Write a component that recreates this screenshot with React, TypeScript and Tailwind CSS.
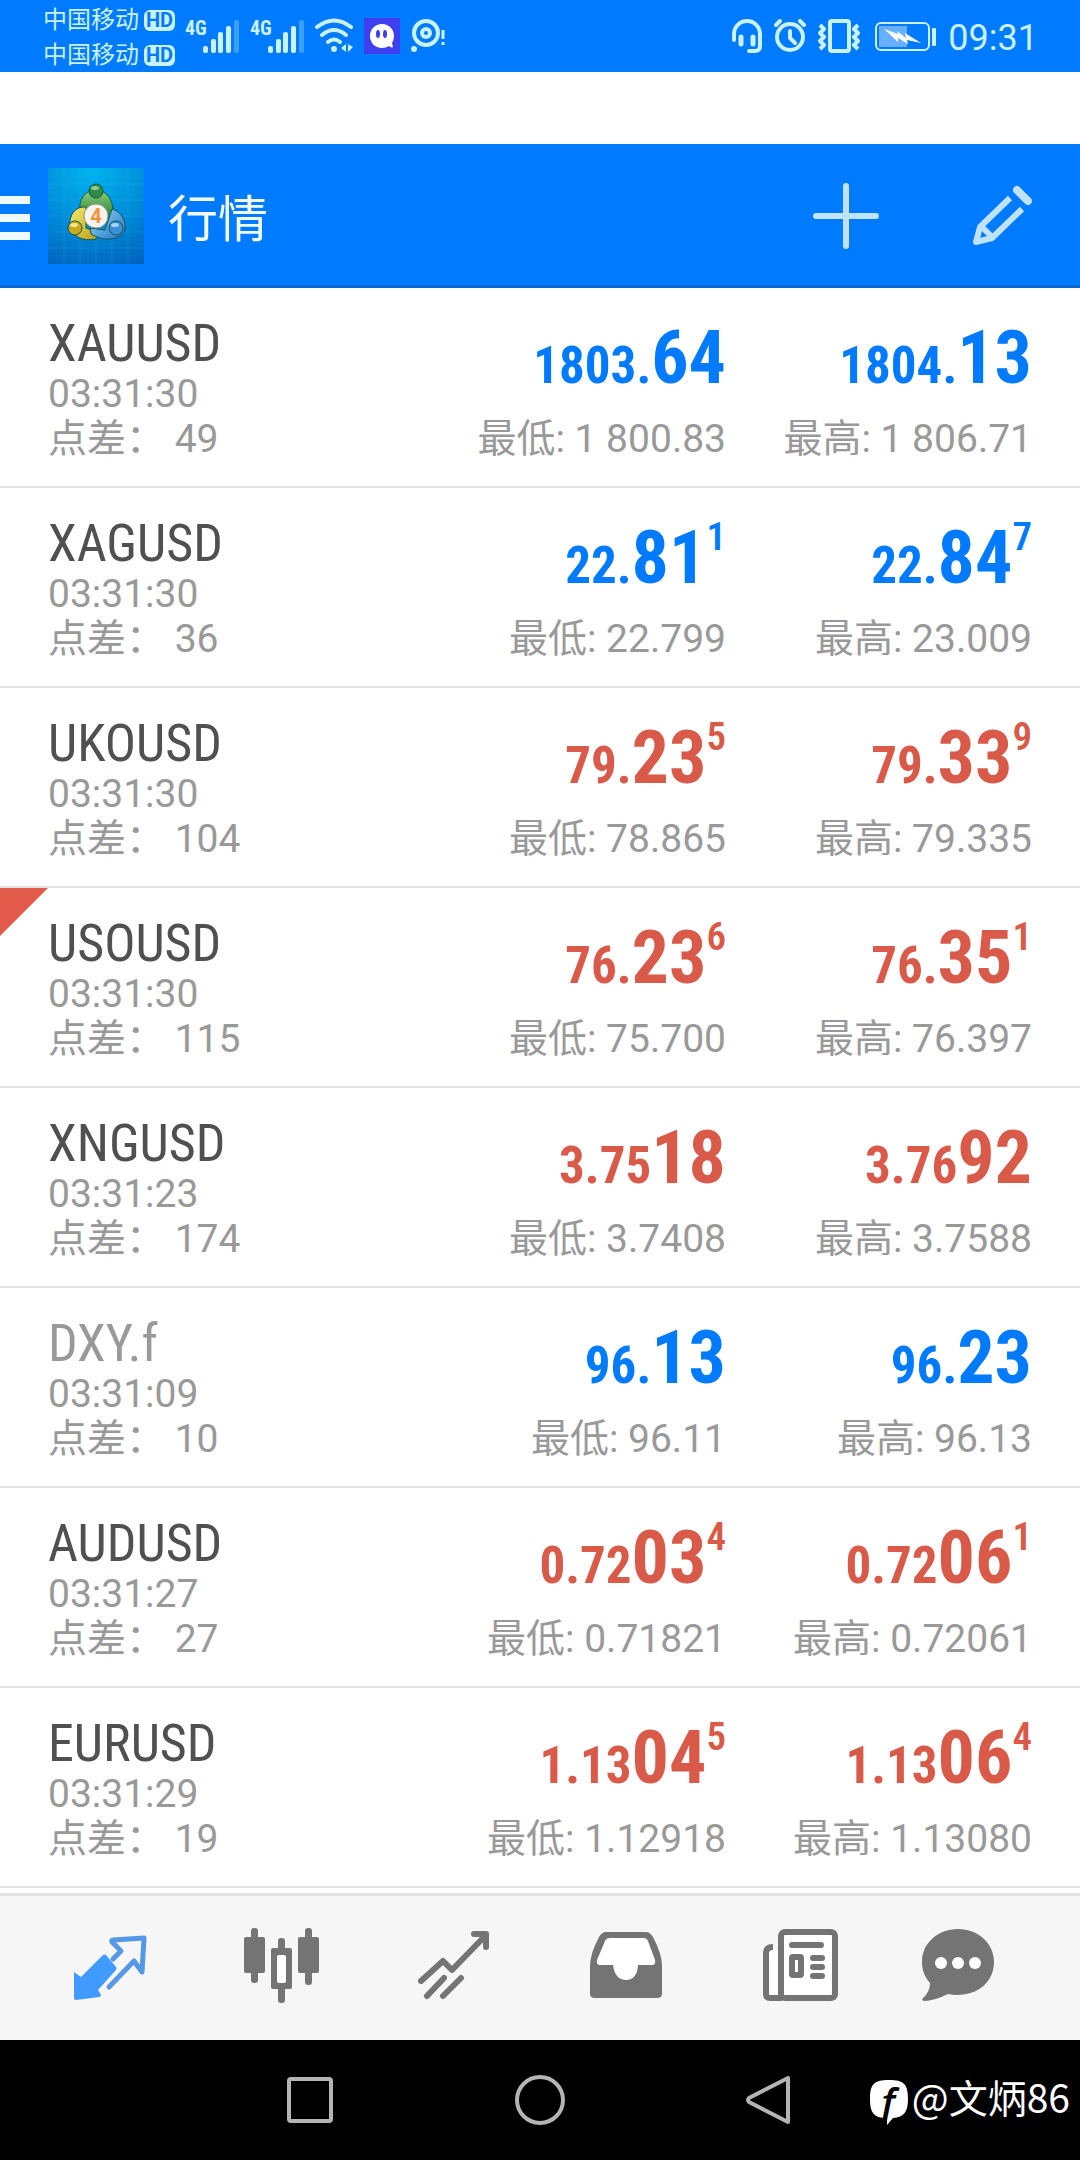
import type { ReactNode } from 'react';
import clsx from 'clsx';

interface Price {
  small: string;
  big: string;
  sup?: string;
}

interface Quote {
  symbol: string;
  time: string;
  spread: number;
  trend: 'up' | 'down';
  bid: Price;
  ask: Price;
  low: string;
  high: string;
  muted?: boolean;
  flagged?: boolean;
}

const QUOTES: Quote[] = [
  {
    symbol: 'XAUUSD', time: '03:31:30', spread: 49, trend: 'up',
    bid: { small: '1803.', big: '64' }, ask: { small: '1804.', big: '13' },
    low: '1 800.83', high: '1 806.71'
  },
  {
    symbol: 'XAGUSD', time: '03:31:30', spread: 36, trend: 'up',
    bid: { small: '22.', big: '81', sup: '1' }, ask: { small: '22.', big: '84', sup: '7' },
    low: '22.799', high: '23.009'
  },
  {
    symbol: 'UKOUSD', time: '03:31:30', spread: 104, trend: 'down',
    bid: { small: '79.', big: '23', sup: '5' }, ask: { small: '79.', big: '33', sup: '9' },
    low: '78.865', high: '79.335'
  },
  {
    symbol: 'USOUSD', time: '03:31:30', spread: 115, trend: 'down',
    bid: { small: '76.', big: '23', sup: '6' }, ask: { small: '76.', big: '35', sup: '1' },
    low: '75.700', high: '76.397', flagged: true
  },
  {
    symbol: 'XNGUSD', time: '03:31:23', spread: 174, trend: 'down',
    bid: { small: '3.75', big: '18' }, ask: { small: '3.76', big: '92' },
    low: '3.7408', high: '3.7588'
  },
  {
    symbol: 'DXY.f', time: '03:31:09', spread: 10, trend: 'up',
    bid: { small: '96.', big: '13' }, ask: { small: '96.', big: '23' },
    low: '96.11', high: '96.13', muted: true
  },
  {
    symbol: 'AUDUSD', time: '03:31:27', spread: 27, trend: 'down',
    bid: { small: '0.72', big: '03', sup: '4' }, ask: { small: '0.72', big: '06', sup: '1' },
    low: '0.71821', high: '0.72061'
  },
  {
    symbol: 'EURUSD', time: '03:31:29', spread: 19, trend: 'down',
    bid: { small: '1.13', big: '04', sup: '5' }, ask: { small: '1.13', big: '06', sup: '4' },
    low: '1.12918', high: '1.13080'
  }
];

function Carrier() {
  return (
    <div className="flex items-center gap-[5px] h-[35px]">
      <span className="text-2xl leading-none">中国移动</span>
      <span className="w-[31px] h-[21px] rounded-[6px] bg-[#c8f2ff] text-[#007aff] font-['Roboto'] font-bold text-xl leading-[21px] text-center">
        HD
      </span>
    </div>
  );
}

function Signal() {
  return (
    <div className="flex items-start h-9">
      <span className="w-[18px] font-['Roboto_Condensed'] font-bold text-xl leading-5">4G</span>
      <svg viewBox="0 0 36 36" className="w-9 h-9" fill="#c8f2ff">
        <rect x="0" y="28" width="5" height="7" rx="2" />
        <rect x="8" y="21" width="5" height="14" rx="2" />
        <rect x="15" y="14" width="5" height="21" rx="2" />
        <rect x="23" y="8" width="5" height="27" rx="2" />
        <rect x="31" y="2" width="5" height="33" rx="2" opacity="0.3" />
      </svg>
    </div>
  );
}

function StatusBar() {
  return (
    <div className="h-[72px] bg-[#007aff] text-[#c8f2ff] flex items-center pl-[43px] pr-[42px]">
      <div className="pt-[3px]">
        <Carrier />
        <Carrier />
      </div>
      <div className="flex items-center gap-[11px] ml-[10px]">
        <Signal />
        <Signal />
        <svg viewBox="0 0 38 36" className="w-[38px] h-9" fill="none" stroke="#c8f2ff" strokeWidth="4" strokeLinecap="round">
          <path d="M2 9Q19-4 36 9M7 17Q19 7 31 17M13 24Q19 19 25 24" />
          <circle cx="19" cy="31" r="3" fill="#c8f2ff" stroke="none" />
          <path d="M31 26v8l-5-4zM33 26v8l5-5z" fill="#c8f2ff" stroke="none" />
        </svg>
        <svg viewBox="0 0 36 36" className="w-9 h-9">
          <rect width="36" height="36" fill="#3d3ff0" />
          <path d="M18 6c-7 0-12 5-12 12s5 12 12 12c3 0 5-1 7-2 1 1 3 2 4 1l-1-4c1-2 2-4 2-7 0-7-5-12-12-12z" fill="#fff" />
          <ellipse cx="14" cy="16" rx="2" ry="4" fill="#3d3ff0" />
          <ellipse cx="21" cy="16" rx="2" ry="4" fill="#3d3ff0" />
        </svg>
        <svg viewBox="0 0 34 36" className="w-[34px] h-9" fill="none" stroke="#c8f2ff" strokeWidth="4">
          <circle cx="15" cy="15" r="12" />
          <circle cx="15" cy="15" r="4" />
          <circle cx="3" cy="31" r="3" fill="#c8f2ff" stroke="none" />
          <path d="M32 12v9M32 24v3" strokeWidth="3" />
        </svg>
      </div>
      <div className="flex items-center gap-[11px] ml-auto">
        <svg viewBox="0 0 30 34" className="w-[30px] h-[34px]" fill="none" stroke="#c8f2ff" strokeWidth="4" strokeLinecap="round">
          <path d="M2 21V15a13 13 0 0 1 26 0v12q0 5-5 5H17" />
          <path d="M9 18v7M21 18v7" strokeWidth="5" />
        </svg>
        <svg viewBox="0 0 34 34" className="w-[34px] h-[34px]" fill="none" stroke="#c8f2ff" strokeWidth="4" strokeLinecap="round" strokeLinejoin="round">
          <circle cx="17" cy="18" r="13" />
          <path d="M17 12v7l5 5M3 6l4-4M31 6l-4-4" />
        </svg>
        <svg viewBox="0 0 42 34" className="w-[42px] h-[34px]" fill="none" stroke="#c8f2ff" strokeWidth="4" strokeLinejoin="round">
          <rect x="12" y="2" width="19" height="30" rx="2" />
          <path d="M2 6l4 4-4 4 4 4-4 4 4 4-4 4M40 6l-4 4 4 4-4 4 4 4-4 4 4 4" strokeWidth="4" />
        </svg>
        <svg viewBox="0 0 62 30" className="w-[62px] h-[30px] ml-1">
          <rect x="1" y="2" width="53" height="27" rx="5" fill="none" stroke="#c8f2ff" strokeWidth="2" />
          <rect x="4" y="5" width="28" height="21" fill="#66b0ff" />
          <path d="M9 8l14 5-1-3 9 7-1-5 16 10-14-3 1 4-10-6v4z" fill="#fff" />
          <rect x="57" y="7" width="4" height="18" rx="1" fill="#c8f2ff" />
        </svg>
        <span className="pt-1 font-['Roboto'] text-4xl leading-10">09:31</span>
      </div>
    </div>
  );
}

function AppLogo() {
  return (
    <svg viewBox="0 0 96 96" className="w-24 h-24">
      <defs>
        <radialGradient id="logo-bg" cx="0.45" cy="0" r="1.1">
          <stop offset="0" stopColor="#00b4f0" />
          <stop offset="0.5" stopColor="#0090dc" />
          <stop offset="1" stopColor="#0064be" />
        </radialGradient>
        <linearGradient id="logo-green" x1="0" y1="0" x2="0" y2="1">
          <stop offset="0" stopColor="#8fd07a" />
          <stop offset="1" stopColor="#1f7d38" />
        </linearGradient>
        <linearGradient id="logo-yellow" x1="0" y1="0" x2="1" y2="1">
          <stop offset="0" stopColor="#f6ec72" />
          <stop offset="1" stopColor="#b89a10" />
        </linearGradient>
        <linearGradient id="logo-blue" x1="0" y1="0" x2="1" y2="1">
          <stop offset="0" stopColor="#9bd8fa" />
          <stop offset="1" stopColor="#1d74c4" />
        </linearGradient>
      </defs>
      <rect width="96" height="96" fill="url(#logo-bg)" />
      <path d="M16 0v96M32 0v96M48 0v96M64 0v96M80 0v96M0 16h96M0 32h96M0 48h96M0 64h96M0 80h96" stroke="#5cc4f4" strokeWidth="1" opacity="0.15" />
      <g stroke="#14564a" strokeWidth="1">
        <path d="M32 45C30 29 39 22 48 22s18 8 17 25l-7 4-8-13z" fill="url(#logo-green)" />
        <path d="M38 39C27 38 21 47 22 58c1 10 13 16 26 13l4-6-14-5z" fill="url(#logo-yellow)" />
        <path d="M64 41c10 3 14 12 13 20-2 10-19 14-34 5l-1-6 15 2z" fill="url(#logo-blue)" />
        <circle cx="48" cy="23" r="7" fill="#2f8b45" />
        <circle cx="27" cy="60" r="7" fill="#c8aa1c" />
        <circle cx="68" cy="60" r="7" fill="#3c8ed8" />
      </g>
      <ellipse cx="47" cy="20" rx="4" ry="2" fill="#a5dc9c" opacity="0.8" />
      <ellipse cx="26" cy="57" rx="4" ry="2" fill="#fff2a0" opacity="0.8" />
      <ellipse cx="67" cy="57" rx="4" ry="2" fill="#c4e6ff" opacity="0.8" />
      <circle cx="48" cy="48" r="12" fill="#f7f3f0" stroke="#8f9a80" />
      <text x="48" y="55" textAnchor="middle" fontFamily="'Roboto'" fontWeight="700" fontSize="20" fill="#f59238">4</text>
    </svg>
  );
}

function Header() {
  return (
    <header className="h-36 bg-[#007aff] shadow-[inset_0_-3px_0_#0a68cf] flex items-center pr-10">
      <button aria-label="菜单" className="flex flex-col gap-[10px] mr-[18px] pt-1">
        <span className="w-[30px] h-2 bg-[#eefaff]" />
        <span className="w-[30px] h-2 bg-[#eefaff]" />
        <span className="w-[30px] h-2 bg-[#eefaff]" />
      </button>
      <AppLogo />
      <h1 className="ml-6 pt-2 text-[50px] leading-[50px] text-[#f2fcff]">行情</h1>
      <button aria-label="添加" className="ml-auto mr-[50px]">
        <svg viewBox="0 0 96 96" className="w-24 h-24" stroke="#bfe2ff" strokeWidth="6" strokeLinecap="round">
          <path d="M48 18v60M18 48h60" />
        </svg>
      </button>
      <button aria-label="编辑">
        <svg viewBox="0 0 96 96" className="w-24 h-24" fill="none" stroke="#bfe2ff" strokeWidth="6" strokeLinejoin="round">
          <path d="M66 30L36 59l-4 15 16-4 30-29M37 58l11 11" />
          <path d="M73 22l11 11" strokeWidth="8" strokeLinecap="round" />
        </svg>
      </button>
    </header>
  );
}

function PriceText({ price, trend }: { price: Price; trend: Quote['trend'] }) {
  return (
    <p
      className={clsx(
        "font-['Roboto_Condensed'] font-bold text-[74px] leading-[84px] whitespace-nowrap",
        trend === 'up' ? 'text-[#007aff]' : 'text-[#da5a4a]'
      )}
    >
      <span className="text-[51px] leading-none">{price.small}</span>
      {price.big}
      {price.sup && <span className="text-[39px] leading-none font-semibold align-[33px]">{price.sup}</span>}
    </p>
  );
}

function QuoteRow({ quote }: { quote: Quote }) {
  return (
    <li className="relative h-[200px] border-b-2 border-[#e2e2e2] px-12 pt-7 flex text-[39px] leading-[45px] text-[#999]">
      {quote.flagged && (
        <svg viewBox="0 0 48 48" className="absolute left-0 top-0 w-12 h-12" fill="#e25a4a">
          <path d="M0 0h48L0 48z" />
        </svg>
      )}
      <div className="flex-1">
        <h2
          className={clsx(
            "font-['Roboto_Condensed'] text-[52px] leading-[56px]",
            quote.muted ? 'text-[#999]' : 'text-[#505050]'
          )}
        >
          {quote.symbol}
        </h2>
        <p>{quote.time}</p>
        <p>点差： {quote.spread}</p>
      </div>
      <div className="w-[306px] text-right">
        <PriceText price={quote.bid} trend={quote.trend} />
        <p className="mt-[17px]">最低: {quote.low}</p>
      </div>
      <div className="w-[306px] text-right">
        <PriceText price={quote.ask} trend={quote.trend} />
        <p className="mt-[17px]">最高: {quote.high}</p>
      </div>
    </li>
  );
}

function Tab({ label, children }: { label: string; children: ReactNode }) {
  return (
    <button aria-label={label} className="flex-1 flex justify-center">
      <svg viewBox="0 0 172 144" className="w-[172px] h-36">
        {children}
      </svg>
    </button>
  );
}

function TabBar() {
  return (
    <nav className="h-[147px] border-t-[3px] border-[#e3e3e3] bg-[#f6f6f6] px-6 flex">
      <Tab label="行情">
        <path d="M50 76L57 81 79 59Q80 58 82 59L92 71Q93 72 92 74L74 94 77 99Q77 101 75 101L52 104Q50 104 50 102Z" fill="#419bff" />
        <path d="M89 63l8-8-9-9q-1-2 1-2l31-2-2 34-8-11-25 26" fill="none" stroke="#5598e8" strokeWidth="5" strokeLinecap="round" strokeLinejoin="round" />
      </Tab>
      <Tab label="图表">
        <g fill="#747474">
          <rect x="48" y="41" width="21" height="36" rx="2" />
          <rect x="55" y="32" width="7" height="55" rx="3" />
          <rect x="102" y="41" width="21" height="36" rx="2" />
          <rect x="109" y="32" width="7" height="57" rx="3" />
          <rect x="82" y="42" width="7" height="65" rx="3" />
          <rect x="75" y="52" width="21" height="41" rx="2" />
        </g>
        <rect x="81" y="59" width="9" height="28" rx="2" fill="#fff" />
      </Tab>
      <Tab label="交易">
        <path d="M53 85l22-20 9 9 33-34M106 38h12v13M59 100l17-18M75 100l18-18" fill="none" stroke="#747474" strokeWidth="6" strokeLinecap="round" strokeLinejoin="round" />
      </Tab>
      <Tab label="历史">
        <path d="M66 36h40q4 0 7 5 9 17 9 29v28q0 4-5 4H55q-5 0-5-4V70q0-12 9-29 3-5 7-5z" fill="#747474" />
        <path d="M70 42h33q4 0 5 3l7 19q1 5-3 5H98q-1 15-12 15T73 69H60q-4 0-3-5l8-19q1-3 5-3z" fill="#fff" />
      </Tab>
      <Tab label="新闻">
        <rect x="56" y="54" width="12" height="46" fill="#fff" />
        <path d="M61 51q-7 0-7 6v41q0 4 4 4h12" fill="none" stroke="#747474" strokeWidth="6" />
        <rect x="69" y="36" width="54" height="66" rx="4" fill="#fff" stroke="#747474" strokeWidth="6" />
        <path d="M80 49h29M101 62h9M101 71h9M101 80h9" stroke="#747474" strokeWidth="6" strokeLinecap="round" />
        <rect x="80" y="61" width="9" height="18" rx="1" fill="#fff" stroke="#747474" strokeWidth="6" />
      </Tab>
      <Tab label="消息">
        <path d="M74 33c20 0 36 14 36 33s-15 33-37 33q-4 0-9-1-14 7-24 7-3-1-1-3 7-6 7-15c-5-6-8-12-8-21 0-19 16-33 36-33z" fill="#747474" />
        <circle cx="57" cy="67" r="6" fill="#fff" />
        <circle cx="74" cy="67" r="6" fill="#fff" />
        <circle cx="91" cy="67" r="6" fill="#fff" />
      </Tab>
    </nav>
  );
}

function SystemNav() {
  return (
    <div className="relative h-[120px] bg-black px-[18%] grid grid-cols-3 place-items-center">
      <button aria-label="最近任务">
        <svg viewBox="0 0 52 52" className="w-[52px] h-[52px]" fill="none" stroke="#b4b4b4" strokeWidth="4">
          <rect x="5" y="5" width="42" height="42" rx="2" />
        </svg>
      </button>
      <button aria-label="主屏幕">
        <svg viewBox="0 0 52 52" className="w-[52px] h-[52px]" fill="none" stroke="#b4b4b4" strokeWidth="4">
          <circle cx="26" cy="26" r="23" />
        </svg>
      </button>
      <button aria-label="返回">
        <svg viewBox="0 0 52 52" className="w-[52px] h-[52px]" fill="none" stroke="#b4b4b4" strokeWidth="4" strokeLinejoin="round">
          <path d="M44 4v44L5 28q-2-2 0-4z" />
        </svg>
      </button>
      <div className="absolute right-[10px] top-8 flex items-start gap-1 text-white">
        <svg viewBox="0 0 38 56" className="w-[38px] h-14">
          <path d="M19 8c15 0 19 4 19 19 0 13-4 18-15 19l-6 7V46C4 46 0 41 0 27 0 12 4 8 19 8z" fill="#fff" />
          <text x="18" y="45" textAnchor="middle" fontFamily="'Open Sans'" fontStyle="italic" fontWeight="600" fontSize="40" fill="#000">f</text>
        </svg>
        <span className="font-['Noto_Sans_CJK_SC',sans-serif] text-[39px] leading-[48px]">@文炳86</span>
      </div>
    </div>
  );
}

export default function App() {
  return (
    <div className="min-h-screen flex flex-col bg-white font-['Roboto','Noto_Sans_CJK_SC',sans-serif]">
      <StatusBar />
      <div className="h-[72px]" />
      <Header />
      <ul className="flex-1">
        {QUOTES.map((quote) => (
          <QuoteRow key={quote.symbol} quote={quote} />
        ))}
      </ul>
      <TabBar />
      <SystemNav />
    </div>
  );
}
